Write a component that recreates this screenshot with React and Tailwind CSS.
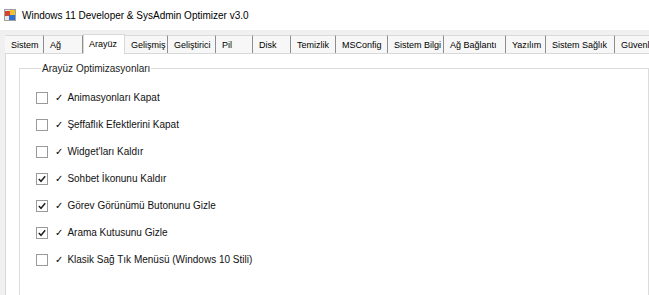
import { useState } from "react";

const tabs = [
  { label: "Sistem", w: "w-[39px]" },
  { label: "Ağ", w: "w-[39px]" },
  { label: "Arayüz", w: "w-[42px]", active: true },
  { label: "Gelişmiş", w: "w-[43px]" },
  { label: "Geliştirici", w: "w-[48px]" },
  { label: "Pil", w: "w-[37px]" },
  { label: "Disk", w: "w-[38px]" },
  { label: "Temizlik", w: "w-[45px]" },
  { label: "MSConfig", w: "w-[52px]" },
  { label: "Sistem Bilgi", w: "w-[56px]" },
  { label: "Ağ Bağlantı", w: "w-[62px]" },
  { label: "Yazılım", w: "w-[40px]" },
  { label: "Sistem Sağlık", w: "w-[69px]" },
  { label: "Güvenlik", w: "w-[60px]" },
];

const initialOptions = [
  { label: "Animasyonları Kapat", checked: false },
  { label: "Şeffaflık Efektlerini Kapat", checked: false },
  { label: "Widget'ları Kaldır", checked: false },
  { label: "Sohbet İkonunu Kaldır", checked: true },
  { label: "Görev Görünümü Butonunu Gizle", checked: true },
  { label: "Arama Kutusunu Gizle", checked: true },
  { label: "Klasik Sağ Tık Menüsü (Windows 10 Stili)", checked: false },
];

const AppIcon = () => (
  <svg width="12" height="12" viewBox="0 0 12 12" className="shrink-0">
    <rect x="0.5" y="0.5" width="11" height="11" fill="#e8e8e8" stroke="#a0a0a0" />
    <rect x="1" y="2" width="5" height="5" fill="#d9412b" />
    <rect x="6" y="1" width="5" height="5" fill="#f2c12e" />
    <rect x="5" y="6" width="6" height="5" fill="#2f6fd1" />
  </svg>
);

const CheckBox = ({ checked, onClick }) => (
  <button
    type="button"
    onClick={onClick}
    className="w-[12px] h-[12px] shrink-0 border border-[#9a9a9a] bg-white flex items-center justify-center"
  >
    {checked && (
      <svg width="8" height="8" viewBox="0 0 8 8">
        <path d="M0.8 4 L3 6.3 L7.2 1.2" fill="none" stroke="#222" strokeWidth="1.5" />
      </svg>
    )}
  </button>
);

export default function App() {
  const [options, setOptions] = useState(initialOptions);

  const toggle = (idx) =>
    setOptions((prev) =>
      prev.map((o, i) => (i === idx ? { ...o, checked: !o.checked } : o))
    );

  return (
    <div className="w-[649px] h-[295px] overflow-hidden bg-[#f0f0f0] text-black font-['Liberation_Sans',sans-serif]">
      {/* title bar */}
      <div className="h-[30px] bg-white flex items-center pl-[4px] gap-[6px]">
        <AppIcon />
        <span className="text-[10px]">
          Windows 11 Developer &amp; SysAdmin Optimizer v3.0
        </span>
      </div>

      <div className="pl-[5px] pt-[3px]">
        {/* tab strip */}
        <div className="flex items-end h-[20px] whitespace-nowrap">
          {tabs.map((tab) =>
            tab.active ? (
              <div
                key={tab.label}
                className={`${tab.w} shrink-0 h-[20px] bg-white border-l border-t border-r border-[#d9d9d9] pl-[5px] pt-[4px] text-[9px] leading-[11px] relative z-10 -mb-[1px]`}
              >
                {tab.label}
              </div>
            ) : (
              <div
                key={tab.label}
                className={`${tab.w} shrink-0 h-[18px] bg-[#f7f7f7] border-t border-[#dadada] border-r border-r-[#8e8e8e] pl-[6px] pt-[4px] text-[9px] leading-[11px] overflow-hidden`}
              >
                {tab.label}
              </div>
            )
          )}
        </div>

        {/* tab page */}
        <div className="bg-white border-l border-t border-[#d9d9d9] h-[250px] pl-[13px] pt-[8px]">
          <fieldset className="border border-[#dcdcdc] h-[260px] pl-[16px] pt-[9px]">
            <legend className="ml-[5px] px-[1px] text-[10px] leading-[13px] text-[#222]">
              Arayüz Optimizasyonları
            </legend>
            <ul className="flex flex-col">
              {options.map((opt, idx) => (
                <li key={opt.label} className="h-[27px] flex items-center">
                  <CheckBox checked={opt.checked} onClick={() => toggle(idx)} />
                  <span className="ml-[7px] text-[10px] font-['DejaVu_Sans'] leading-none">
                    ✓
                  </span>
                  <span className="ml-[4px] text-[10px] leading-none text-[#111]">
                    {opt.label}
                  </span>
                </li>
              ))}
            </ul>
          </fieldset>
        </div>
      </div>
    </div>
  );
}
